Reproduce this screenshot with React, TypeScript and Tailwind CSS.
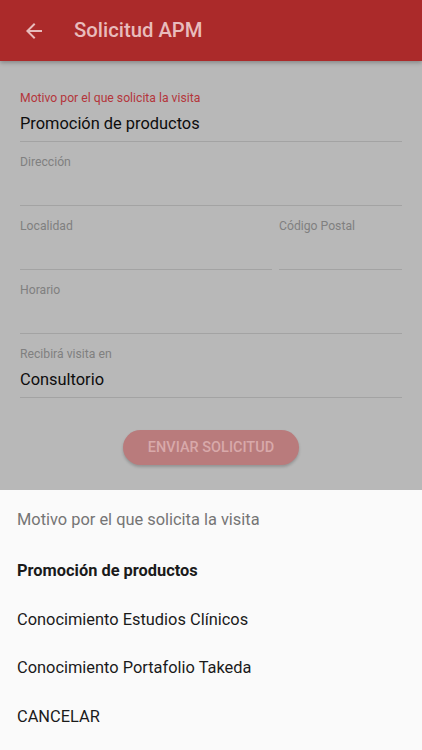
import React from "react";

function Field({ label, value, red, className = "" }: { label: string; value?: string; red?: boolean; className?: string }) {
  return (
    <div className={`flex flex-col border-b border-[#a3a3a3] pb-[5px] ${className}`}>
      <div className={`h-4 text-[12.2px] leading-4 ${red ? "text-[#b4363b]" : "text-[#808080]"}`}>{label}</div>
      <div className="mt-[6px] h-6 text-[16.4px] leading-6 text-[#0d0d0d]">{value ?? ""}</div>
    </div>
  );
}

export default function App() {
  return (
    <div className="relative h-[750px] w-[422px] overflow-hidden bg-[#b8b8b8]" style={{ fontFamily: "Roboto, 'Noto Sans', sans-serif" }}>
      <header className="flex h-[61px] items-center bg-[#ab2a2a] shadow-[0_2px_4px_rgba(0,0,0,0.25)]">
        <svg className="ml-[22px] h-6 w-6" viewBox="0 0 24 24" fill="#e8bcbc">
          <path d="M20 11H7.83l5.59-5.59L12 4l-8 8 8 8 1.41-1.41L7.83 13H20v-2z" />
        </svg>
        <h1 className="ml-[28px] text-[20.3px] font-medium text-[#e8bcbc]">Solicitud APM</h1>
      </header>
      <div className="flex flex-col px-5 pt-[29px]">
        <Field label="Motivo por el que solicita la visita" value="Promoción de productos" red />
        <Field label="Dirección" className="mt-3" />
        <div className="mt-3 flex gap-[7px]">
          <Field label="Localidad" className="w-[252px]" />
          <Field label="Código Postal" className="flex-1" />
        </div>
        <Field label="Horario" className="mt-3" />
        <Field label="Recibirá visita en" value="Consultorio" className="mt-3" />
        <div className="mt-[32px] flex justify-center">
          <button className="h-[35px] w-[176px] rounded-full bg-[#b97b7c] text-[14.5px] font-medium text-[#d8a9aa] shadow-[0_2px_3px_rgba(0,0,0,0.2)]">
            ENVIAR SOLICITUD
          </button>
        </div>
      </div>
      <div className="absolute bottom-0 left-0 right-0 flex h-[260px] flex-col bg-[#fafafa] pt-[18px] text-[16.4px]">
        <div className="flex h-6 items-center pl-[17px] text-[#757575]">Motivo por el que solicita la visita</div>
        <div className="mt-[27px] flex h-6 items-center pl-[17px] font-bold text-[#1a1a1a]">Promoción de productos</div>
        <div className="mt-[25px] flex h-6 items-center pl-[17px] text-[#1a1a1a]">Conocimiento Estudios Clínicos</div>
        <div className="mt-[24px] flex h-6 items-center pl-[17px] text-[#1a1a1a]">Conocimiento Portafolio Takeda</div>
        <div className="mt-[25px] flex h-6 items-center pl-[17px] text-[#1a1a1a]">CANCELAR</div>
      </div>
    </div>
  );
}
